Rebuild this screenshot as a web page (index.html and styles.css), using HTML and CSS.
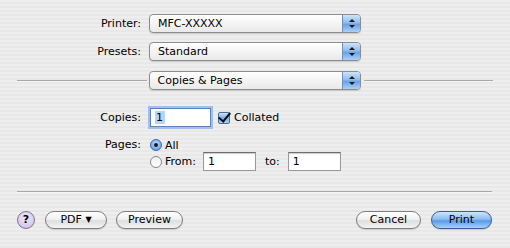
FILE: index.html
```html
<!DOCTYPE html>
<html lang="en">

<head>
    <meta charset="UTF-8">
    <title>Print</title>
    <link rel="stylesheet" href="styles.css">
</head>

<body>
    <div class="dialog">
        <div class="fields">
            <label class="field-label">Printer:</label>
            <div class="popup"><span class="popup-text">MFC-XXXXX</span><span class="popup-arrows"></span></div>
            <label class="field-label">Presets:</label>
            <div class="popup"><span class="popup-text">Standard</span><span class="popup-arrows"></span></div>
        </div>

        <div class="section-row">
            <div class="rule"></div>
            <div class="popup"><span class="popup-text">Copies &amp; Pages</span><span class="popup-arrows"></span></div>
            <div class="rule"></div>
        </div>

        <div class="pane">
            <div class="pane-row copies-row">
                <label class="field-label">Copies:</label>
                <div class="textbox focused"><span class="selected">1</span></div>
                <span class="checkbox checked"></span>
                <span class="option-text">Collated</span>
            </div>
            <div class="pane-row pages-row">
                <label class="field-label">Pages:</label>
                <div class="page-options">
                    <div class="option">
                        <span class="radio on"></span>
                        <span class="option-text">All</span>
                    </div>
                    <div class="option">
                        <span class="radio"></span>
                        <span class="option-text">From:</span>
                        <div class="textbox small"><span>1</span></div>
                        <span class="option-text to-label">to:</span>
                        <div class="textbox small"><span>1</span></div>
                    </div>
                </div>
            </div>
        </div>

        <div class="rule bottom-rule"></div>

        <div class="button-bar">
            <div class="left-buttons">
                <button class="help">?</button>
                <button class="pill pdf">PDF <span class="down">&#9660;</span></button>
                <button class="pill preview">Preview</button>
            </div>
            <div class="right-buttons">
                <button class="pill cancel">Cancel</button>
                <button class="pill default">Print</button>
            </div>
        </div>
    </div>
</body>

</html>
```

FILE: styles.css
```css
body {
    margin: 0;
    width: 510px;
    height: 248px;
    font-family: "DejaVu Sans", sans-serif;
    font-size: 11px;
    color: #000;
    background: repeating-linear-gradient(to bottom, #eeeeee 0, #eeeeee 2px, #e8e8e8 2px, #e8e8e8 4px);
    overflow: hidden;
}

.dialog {
    padding: 14px 17px 0 17px;
}

.fields {
    display: grid;
    grid-template-columns: 124px 212px;
    column-gap: 8px;
    row-gap: 9px;
    align-items: center;
}

.field-label {
    text-align: right;
}

.popup {
    height: 19px;
    box-sizing: border-box;
    display: flex;
    align-items: stretch;
    border: 1px solid #8d8d8d;
    border-radius: 4px;
    background: linear-gradient(to bottom, #ffffff 0%, #f4f4f4 50%, #e9e9e9 100%);
    box-shadow: 0 1px 1px rgba(0, 0, 0, 0.15);
    overflow: hidden;
}

.popup-text {
    flex: 1;
    padding-left: 8px;
    line-height: 17px;
}

.popup-arrows {
    width: 17px;
    border-left: 1px solid #6e8fbf;
    background: linear-gradient(to bottom, #cfe3fb 0%, #8fbcef 45%, #6aa2e6 55%, #a9d0f7 100%);
    position: relative;
}

.popup-arrows::before,
.popup-arrows::after {
    content: "";
    position: absolute;
    left: 6px;
    border-left: 3px solid transparent;
    border-right: 3px solid transparent;
}

.popup-arrows::before {
    top: 4px;
    border-bottom: 3px solid #1a1a1a;
}

.popup-arrows::after {
    bottom: 4px;
    border-top: 3px solid #1a1a1a;
}

.section-row {
    display: flex;
    align-items: center;
    margin-top: 10px;
}

.section-row .popup {
    width: 212px;
    margin: 0 3px 0 2px;
}

.rule {
    flex: 1;
    height: 1px;
    background: #a8a8a8;
    border-bottom: 1px solid #f6f6f6;
}

.pane {
    padding-top: 18px;
    height: 66px;
}

.pane-row {
    display: flex;
    align-items: center;
}

.pane-row .field-label {
    width: 124px;
    margin-right: 8px;
}

.textbox {
    height: 19px;
    box-sizing: border-box;
    border: 1px solid #9a9a9a;
    border-top-color: #6f6f6f;
    background: #fff;
    box-shadow: inset 0 1px 1px rgba(0, 0, 0, 0.2);
    padding-left: 4px;
    line-height: 17px;
}

.copies-row .textbox {
    width: 61px;
    margin-left: 1px;
}

.textbox.focused {
    border-color: #5e84c0;
    box-shadow: 0 0 0 2px #9ec0ea;
}

.selected {
    background: #b8d3f5;
    padding: 0 2px 0 1px;
}

.checkbox {
    width: 12px;
    height: 12px;
    box-sizing: border-box;
    border: 1px solid #4a6a9a;
    border-radius: 2px;
    margin-left: 7px;
    margin-right: 4px;
    background: linear-gradient(to bottom, #cfe3fb 0%, #7db1ee 50%, #a8d0f8 100%);
    position: relative;
}

.checkbox.checked::after {
    content: "";
    position: absolute;
    left: 2px;
    top: -3px;
    width: 5px;
    height: 10px;
    border-right: 2px solid #111;
    border-bottom: 2px solid #111;
    transform: rotate(40deg);
}

.pages-row {
    align-items: flex-start;
    margin-top: 12px;
}

.pages-row .field-label {
    line-height: 12px;
    margin-top: 0;
}

.page-options {
    display: flex;
    flex-direction: column;
    gap: 1px;
    margin-left: 1px;
}

.option {
    display: flex;
    align-items: center;
    height: 19px;
}

.option:first-child {
    height: 12px;
}

.radio {
    width: 12px;
    height: 12px;
    box-sizing: border-box;
    border-radius: 50%;
    border: 1px solid #8a8a8a;
    background: linear-gradient(to bottom, #f0f0f0, #ffffff);
    margin-right: 3px;
    position: relative;
}

.radio.on {
    border-color: #3f6aa8;
    background: radial-gradient(circle at 50% 40%, #c8e0fb 0%, #6fa6ec 70%, #4d88d8 100%);
}

.radio.on::after {
    content: "";
    position: absolute;
    left: 3px;
    top: 3px;
    width: 4px;
    height: 4px;
    border-radius: 50%;
    background: #1a1a1a;
}

.textbox.small {
    width: 53px;
    margin-left: 7px;
}

.to-label {
    margin-left: 9px;
}

.to-label + .textbox.small {
    margin-left: 8px;
}

.bottom-rule {
    margin-top: 17px;
    margin-right: 1px;
}

.button-bar {
    display: flex;
    justify-content: space-between;
    margin-top: 18px;
    padding-right: 1px;
}

.left-buttons,
.right-buttons {
    display: flex;
    align-items: center;
}

button {
    font-family: "DejaVu Sans", sans-serif;
    font-size: 11px;
    color: #000;
    padding: 0;
    margin: 0;
}

.help {
    width: 18px;
    height: 18px;
    border-radius: 50%;
    border: 1px solid #7a7a7a;
    background: radial-gradient(circle at 50% 35%, #f1e9fb 0%, #d6c7ef 70%, #bfaee0 100%);
    font-weight: bold;
    line-height: 16px;
    margin-right: 10px;
}

.pill {
    height: 18px;
    border-radius: 9px;
    border: 1px solid #7e7e7e;
    background: linear-gradient(to bottom, #ffffff 0%, #f1f1f1 45%, #dedede 55%, #f4f4f4 100%);
    box-shadow: 0 1px 1px rgba(0, 0, 0, 0.15);
    line-height: 16px;
}

.pdf {
    width: 62px;
}

.down {
    font-size: 8px;
    vertical-align: 1px;
}

.preview {
    width: 67px;
    margin-left: 9px;
}

.cancel {
    width: 65px;
}

.default {
    width: 61px;
    margin-left: 10px;
    border-color: #3c5f96;
    background: linear-gradient(to bottom, #cfe4fb 0%, #8cbdf1 45%, #5a9be6 55%, #a6d1fa 100%);
}
```
